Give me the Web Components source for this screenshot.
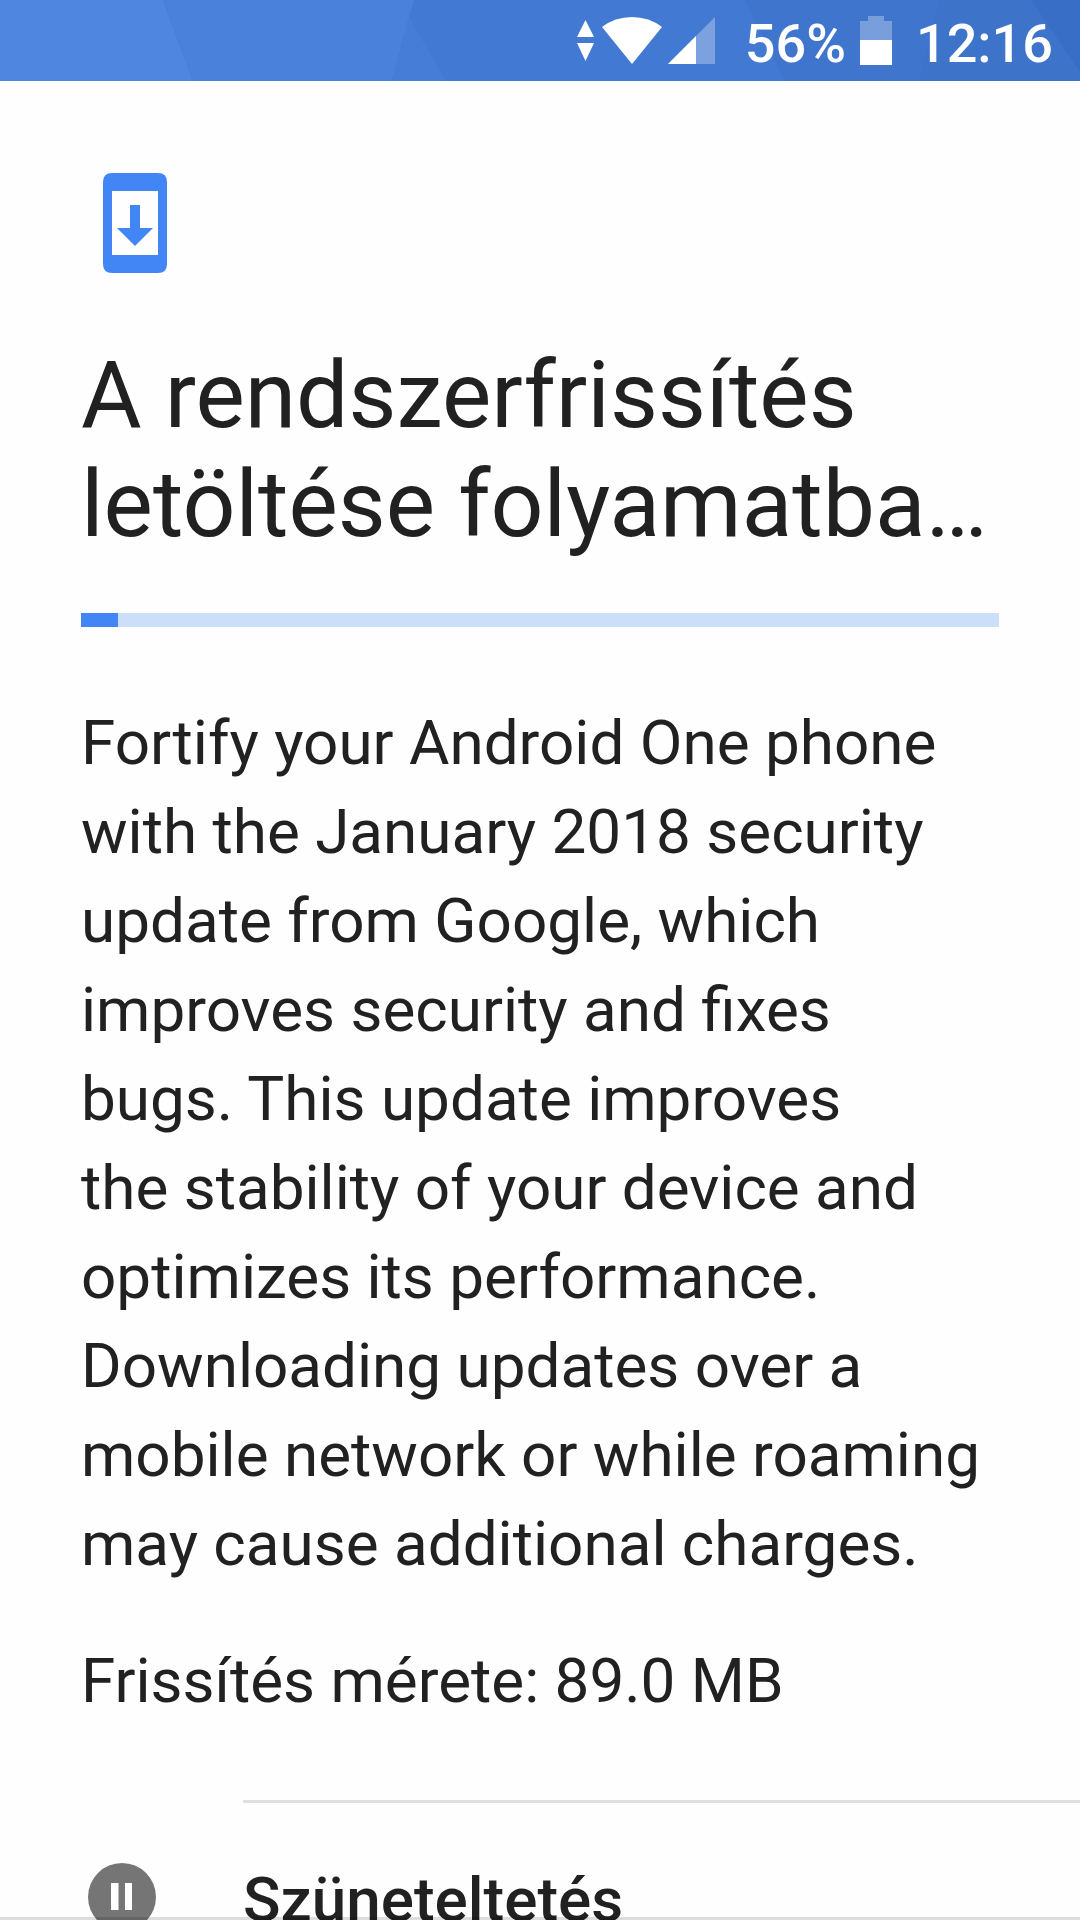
<!DOCTYPE html>
<html lang="hu">
<head>
<meta charset="utf-8">
<meta name="viewport" content="width=device-width">
<title>Rendszerfrissítés</title>
<style>
  html, body { margin: 0; height: 100%; }
  body { background: #fefefe; color: #212121; font-family: Roboto, sans-serif; overflow: hidden; }
</style>
</head>
<body>
<update-screen>
  <status-bar slot="status" battery="56%" time="12:16"></status-bar>
  <update-header slot="header">A rendszerfrissítés letöltése folyamatba…</update-header>
  <download-progress slot="progress" value="4" label="Letöltés"></download-progress>
  <update-notes slot="notes">
    <span>Fortify your Android One phone<br>with the January 2018 security<br>update from Google, which<br>improves security and fixes<br>bugs. This update improves<br>the stability of your device and<br>optimizes its performance.<br>Downloading updates over a<br>mobile network or while roaming<br>may cause additional charges.</span>
    <span slot="size">Frissítés mérete: 89.0 MB</span>
  </update-notes>
  <pause-action slot="actions">Szüneteltetés</pause-action>
</update-screen>

<script>
class BaseElement extends HTMLElement {
  constructor() {
    super();
    this.attachShadow({ mode: "open" });
  }
  connectedCallback() {
    this.shadowRoot.innerHTML = this.render();
  }
}

customElements.define("update-screen", class extends BaseElement {
  render() {
    return `
      <style>
        :host { display: flex; flex-direction: column; height: 100vh; position: relative; }
        main { flex: 1; min-height: 0; overflow-y: auto; scrollbar-width: none; }
        .page { display: flex; flex-direction: column; padding: 92px 81px 75px; }
        .edge { position: absolute; left: 0; right: 0; bottom: 0; height: 3px; background: rgba(0, 0, 0, .13); }
      </style>
      <slot name="status"></slot>
      <main>
        <div class="page">
          <slot name="header"></slot>
          <slot name="progress"></slot>
          <slot name="notes"></slot>
        </div>
        <slot name="actions"></slot>
      </main>
      <div class="edge"></div>`;
  }
});

customElements.define("status-bar", class extends BaseElement {
  render() {
    return `
      <style>
        :host { display: grid; flex: none; height: 81px; overflow: hidden; background: #4279d2; color: #fff; font-size: 54px; font-weight: 500; line-height: 74px; }
        .backdrop, .items { grid-area: 1 / 1; }
        .backdrop { width: 100%; height: 81px; display: block; }
        .items { display: flex; justify-content: flex-end; align-items: flex-end; padding-right: 27px; z-index: 1; }
        .items svg { display: block; flex: none; height: 81px; fill: #fff; }
        .radio { width: 138px; margin-right: 30px; }
        .battery { width: 32px; margin: 0 24px 0 14px; }
      </style>
      <svg class="backdrop" viewBox="0 0 1080 81" preserveAspectRatio="none" aria-hidden="true">
        <path fill="#4f86df" d="M0 0H163L193 81H0Z"/>
        <path fill="#4a81db" d="M163 0H414L409 17L392 81H193Z"/>
        <path fill="#457dd7" d="M409 17L446 81H392Z"/>
        <path fill="#4075cd" d="M745 0H939L918 81H785Z"/>
        <path fill="#3e73ca" d="M939 0H1031L1080 72V81H918Z"/>
        <path fill="#386ec5" d="M1031 0H1080V72Z"/>
      </svg>
      <div class="items">
        <svg class="radio" viewBox="576 0 138 81" aria-hidden="true">
          <path d="M584.5 20L593 37H576ZM576 43H593L584.5 61Z"/>
          <path d="M631 64L601 27Q614 17 631 17T661 27Z"/>
          <path opacity=".3" d="M714 17V64H667Z"/>
          <path d="M695 36V64H667Z"/>
        </svg>
        <span>${this.getAttribute("battery")}</span>
        <svg class="battery" viewBox="859 0 32 81" aria-hidden="true">
          <path opacity=".3" d="M867 16H883V21H891V40H859V21H867Z"/>
          <path d="M859 40H891V65H859Z"/>
        </svg>
        <time>${this.getAttribute("time")}</time>
      </div>`;
  }
});

customElements.define("update-header", class extends BaseElement {
  render() {
    return `
      <style>
        :host { display: block; }
        svg { display: block; width: 108px; height: 100px; fill: #4286f5; }
        h1 { margin: 68px 0 0; font-size: 93px; line-height: 109px; font-weight: 400; }
      </style>
      <svg viewBox="81 173 108 100" aria-hidden="true">
        <path fill-rule="evenodd" d="M112 173H158Q167 173 167 182V264Q167 273 158 273H112Q103 273 103 264V182Q103 173 112 173ZM112 191V255H158V191Z"/>
        <path d="M130 205H140V228H153L135 246L117 228H130Z"/>
      </svg>
      <h1><slot></slot></h1>`;
  }
});

customElements.define("download-progress", class extends BaseElement {
  render() {
    const value = this.getAttribute("value");
    return `
      <style>
        :host { display: block; margin-top: 54px; }
        progress { display: block; appearance: none; width: 100%; height: 14px; border: 0; }
        progress::-webkit-progress-bar { background: #cddefb; }
        progress::-webkit-progress-value { background: #4286f5; }
      </style>
      <progress max="100" value="${value}" aria-label="${this.getAttribute("label")}"></progress>`;
  }
});

customElements.define("update-notes", class extends BaseElement {
  render() {
    return `
      <style>
        :host { display: block; margin-top: 71px; font-size: 62px; line-height: 89px; }
        p { margin: 0; }
        p + p { margin-top: 48px; }
      </style>
      <p><slot></slot></p>
      <p><slot name="size"></slot></p>`;
  }
});

customElements.define("pause-action", class extends BaseElement {
  render() {
    return `
      <style>
        :host { display: block; }
        button { display: flex; align-items: center; width: 100%; margin: 0; padding: 0; border: 0; background: none; color: inherit; font: 500 62px/89px Roboto, sans-serif; text-align: left; }
        .icon { flex: none; padding: 0 87px 0 88px; }
        svg { display: block; width: 68px; height: 68px; }
        .label { flex: 1; border-top: 3px solid #dfdfdf; padding: 52px 0 50px; }
      </style>
      <button type="button">
        <span class="icon">
          <svg viewBox="0 0 68 68" aria-hidden="true">
            <circle cx="34" cy="34" r="34" fill="#757575"/>
            <path fill="#fff" d="M23 20H30.500V47H23ZM37 20H44V47H37Z"/>
          </svg>
        </span>
        <span class="label"><slot></slot></span>
      </button>`;
  }
});
</script>
</body>
</html>
